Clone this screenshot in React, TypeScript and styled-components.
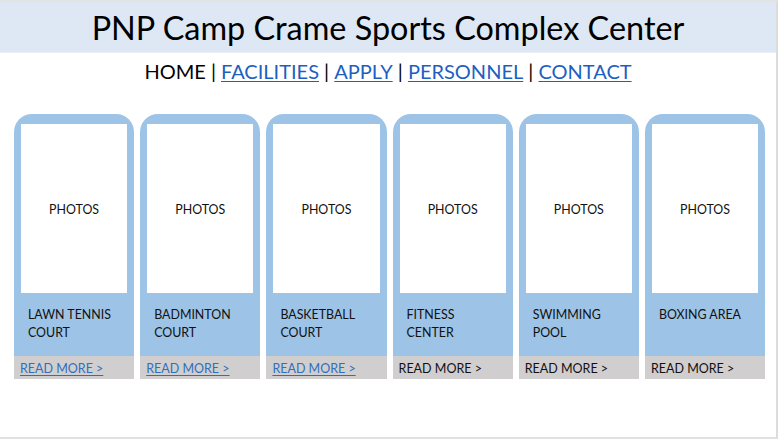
import React from "react";
import styled, { createGlobalStyle } from "styled-components";

const Global = createGlobalStyle`
  html, body { margin: 0; padding: 0; background: #ffffff; }
  body { font-family: "Lato", "Open Sans", sans-serif; }
`;

const Frame = styled.div`
  box-sizing: border-box;
  width: 778px;
  height: 439px;
  border-top: 2px solid #e3e3e3;
  border-right: 2px solid #dcdcdc;
  border-bottom: 2px solid #e0e0e0;
  display: flex;
  flex-direction: column;
  background: #ffffff;
`;

const Header = styled.header`
  height: 50px;
  background: #dde8f4;
  border-bottom: 1px solid #e9f0f8;
  display: flex;
  align-items: center;
  justify-content: center;
`;

const Title = styled.h1`
  margin: 0;
  font-family: "Lato", sans-serif;
  font-weight: 400;
  font-size: 32.4px;
  color: #000;
`;

const Nav = styled.nav`
  margin-top: 4px;
  height: 28px;
  display: flex;
  align-items: center;
  justify-content: center;
  font-size: 20px;
  color: #000;
  white-space: pre;
`;

const NavLink = styled.a<{ $current?: boolean }>`
  color: ${(p) => (p.$current ? "#000" : "#1d5fc1")};
  text-decoration: ${(p) => (p.$current ? "none" : "underline")};
  text-decoration-thickness: 1px;
  text-underline-offset: 2px;
`;

const Sep = styled.span`
  color: #000;
`;

const CardRow = styled.div`
  margin-top: 29px;
  padding-left: 14px;
  display: flex;
  gap: 6px;
`;

const Card = styled.div`
  width: 120.2px;
  background: #9dc3e6;
  border-radius: 18px 18px 0 0;
  padding-top: 10px;
  display: flex;
  flex-direction: column;
`;

const Photo = styled.div`
  box-sizing: border-box;
  margin: 0 7px;
  height: 169px;
  padding-top: 2px;
  background: #ffffff;
  display: flex;
  align-items: center;
  justify-content: center;
  font-size: 12.4px;
  color: #111;
`;

const Label = styled.div`
  height: 63px;
  box-sizing: border-box;
  padding: 13px 6px 0 14px;
  font-size: 12.4px;
  line-height: 18px;
  color: #111;
`;

const ReadMore = styled.div`
  height: 23px;
  box-sizing: border-box;
  background: #d0cece;
  padding: 2px 0 0 6px;
  display: flex;
  align-items: center;
  font-size: 12.5px;
`;

const MoreLink = styled.a<{ $linked?: boolean }>`
  color: ${(p) => (p.$linked ? "#2f6fc0" : "#111")};
  text-decoration: ${(p) => (p.$linked ? "underline" : "none")};
  text-underline-offset: 2px;
`;

const facilities = [
  { name: ["LAWN TENNIS", "COURT"], linked: true },
  { name: ["BADMINTON", "COURT"], linked: true },
  { name: ["BASKETBALL", "COURT"], linked: true },
  { name: ["FITNESS", "CENTER"], linked: false },
  { name: ["SWIMMING", "POOL"], linked: false },
  { name: ["BOXING AREA"], linked: false },
];

export default function App() {
  return (
    <>
      <Global />
      <Frame>
        <Header>
          <Title>PNP Camp Crame Sports Complex Center</Title>
        </Header>
        <Nav>
          <NavLink $current>HOME</NavLink>
          <Sep> | </Sep>
          <NavLink href="#">FACILITIES</NavLink>
          <Sep> | </Sep>
          <NavLink href="#">APPLY</NavLink>
          <Sep> | </Sep>
          <NavLink href="#">PERSONNEL</NavLink>
          <Sep> | </Sep>
          <NavLink href="#">CONTACT</NavLink>
        </Nav>
        <CardRow>
          {facilities.map((f, i) => (
            <Card key={i}>
              <Photo>PHOTOS</Photo>
              <Label>
                {f.name.map((l, j) => (
                  <div key={j}>{l}</div>
                ))}
              </Label>
              <ReadMore>
                <MoreLink $linked={f.linked} href={f.linked ? "#" : undefined}>
                  READ MORE &gt;
                </MoreLink>
              </ReadMore>
            </Card>
          ))}
        </CardRow>
      </Frame>
    </>
  );
}
